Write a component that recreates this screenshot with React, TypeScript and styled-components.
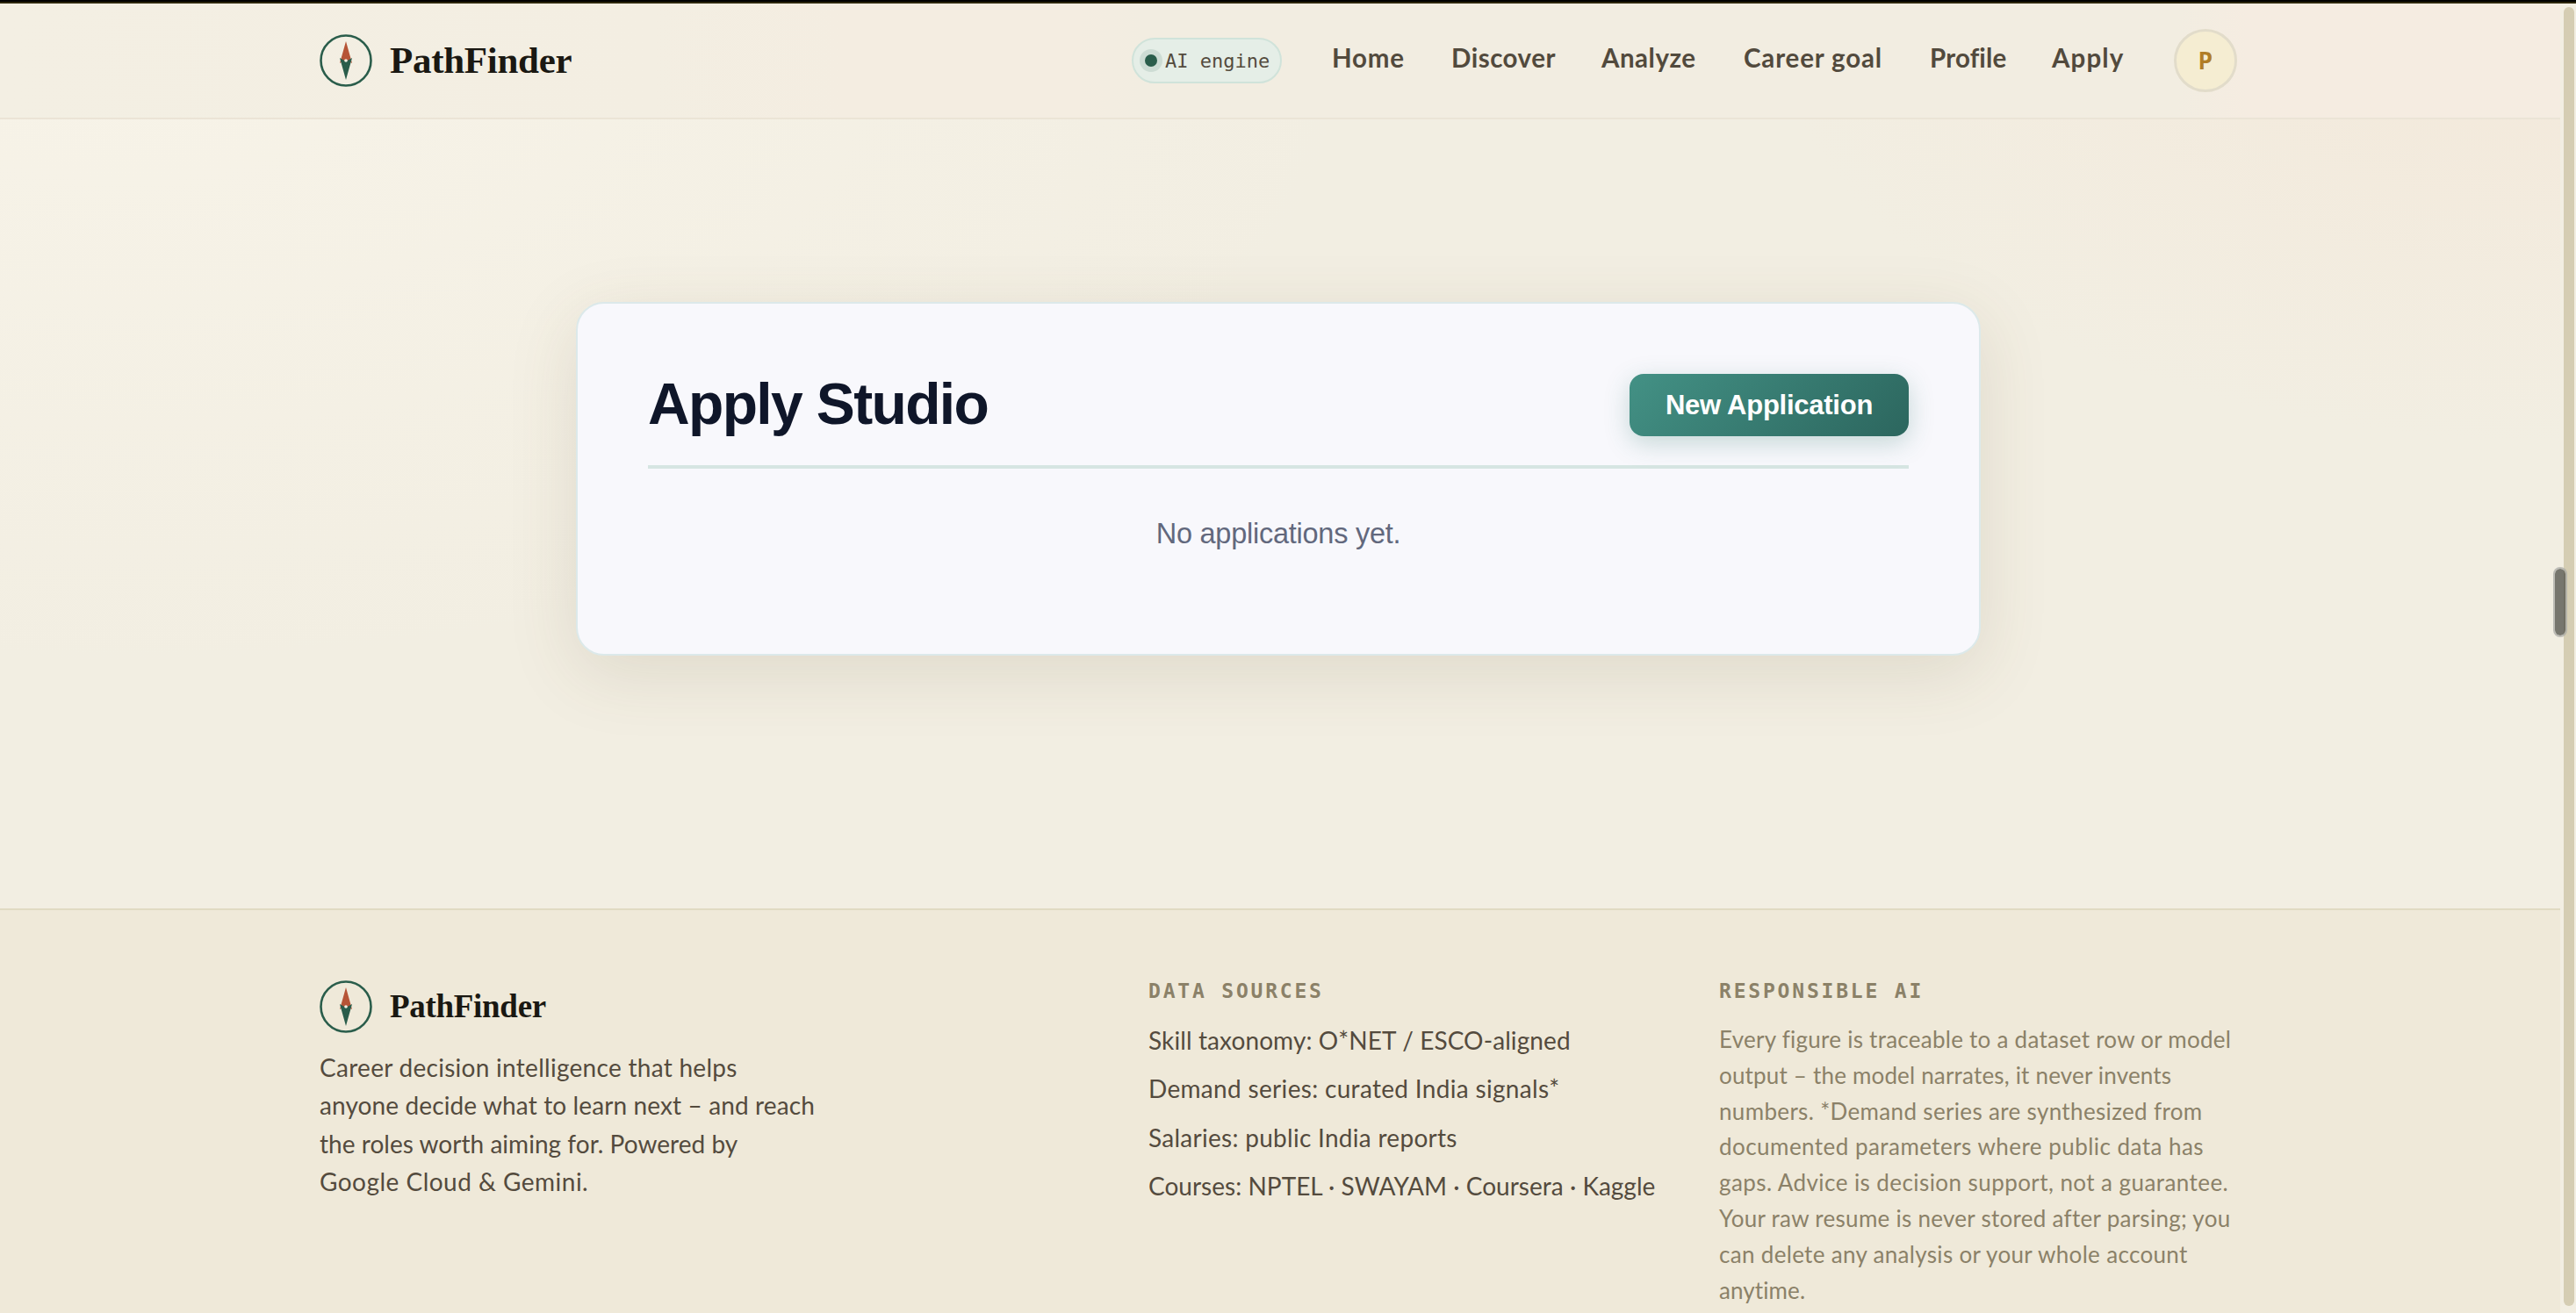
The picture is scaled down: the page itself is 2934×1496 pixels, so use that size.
import React from 'react';
import styled, { createGlobalStyle } from 'styled-components';

const GlobalStyle = createGlobalStyle`
  *, *::before, *::after {
    box-sizing: border-box;
  }
  html, body, #root {
    margin: 0;
    height: 100%;
    overflow: hidden;
  }
  body {
    background: #f2eee2;
    font-family: Lato, sans-serif;
    color: #544b3e;
  }
  h1, h2, p, ul {
    margin: 0;
    padding: 0;
  }
`;

const Screen = styled.div`
  position: relative;
  display: flex;
  flex-direction: column;
  width: 2934px;
  height: 1496px;
  overflow: hidden;
  border-top: 2px solid #000;
`;

const Viewport = styled.div`
  display: flex;
  flex: 1;
  min-height: 0;
  border-top: 2px solid #2c2608;
`;

const Page = styled.div`
  display: flex;
  flex-direction: column;
  width: 2916px;
  background:
    radial-gradient(ellipse 900px 500px at 100% 0, rgba(244, 230, 215, 0.7), transparent),
    radial-gradient(ellipse 1400px 700px at 5% 4%, #f7f3e8, transparent),
    #f2eee2;
`;

const Header = styled.header`
  display: flex;
  flex: none;
  align-items: center;
  height: 132px;
  padding: 0 368px 0 364px;
  background: linear-gradient(90deg, #f3efe3 0, #f3eee2 740px, #f4ede1 960px, #f4ede1 1230px, #f2ede1 1300px, #f2ede1 2480px, #f5ece1 2560px);
  border-bottom: 2px solid #ebe4d6;
`;

const Brand = styled.div<{ $small?: boolean }>`
  display: flex;
  align-items: center;
  gap: 20px;
  font-family: 'Liberation Serif', serif;
  font-weight: 700;
  font-size: ${(p) => (p.$small ? 37 : 43)}px;
  line-height: 58px;
  letter-spacing: -0.3px;
  color: #1a1812;
`;

const Nav = styled.nav`
  display: flex;
  align-items: center;
  margin-left: auto;
`;

const EnginePill = styled.div`
  display: flex;
  align-items: center;
  gap: 9px;
  width: 171px;
  height: 52px;
  margin-right: 57px;
  padding-left: 13px;
  border: 2px solid #d0e3da;
  border-radius: 26px;
  background: #e5eee7;
  font-family: 'DejaVu Sans Mono', monospace;
  font-size: 22px;
  white-space: nowrap;
`;

const Dot = styled.span`
  width: 14px;
  height: 14px;
  border-radius: 50%;
  background: #2a5d4b;
  box-shadow: 0 0 0 6px #cddcd4;
`;

const NavLink = styled.a<{ $width: number; $tracking: number }>`
  width: ${(p) => p.$width}px;
  padding-bottom: 6px;
  font-size: 29.5px;
  font-weight: 700;
  line-height: 40px;
  letter-spacing: ${(p) => p.$tracking}px;
  white-space: nowrap;
  color: #524a3d;
`;

const Avatar = styled.div`
  display: grid;
  place-items: center;
  width: 72px;
  height: 72px;
  border: 3px solid #e2dcca;
  border-radius: 50%;
  background: #f5edd2;
  font-family: 'DejaVu Sans Mono', monospace;
  font-size: 27px;
  font-weight: 700;
  color: #b07d26;
`;

const Main = styled.main`
  flex: none;
  height: 899px;
  padding: 208px 0 0 656px;
`;

const Card = styled.section`
  width: 1600px;
  height: 403px;
  padding: 80px;
  border: 2px solid #dce9ea;
  border-radius: 32px;
  background: #f8f8fc;
  box-shadow: 0 20px 80px rgba(90, 76, 50, 0.13);
  font-family: 'Liberation Sans', sans-serif;
`;

const CardHead = styled.div`
  display: flex;
  align-items: flex-start;
  justify-content: space-between;
  height: 108px;
  border-bottom: 4px solid #d6e5e2;
`;

const Title = styled.h1`
  font-size: 66px;
  line-height: 68px;
  font-weight: 700;
  letter-spacing: -1.65px;
  color: #0f1629;
`;

const PrimaryButton = styled.button`
  width: 318px;
  height: 71px;
  padding: 0;
  border: none;
  border-radius: 16px;
  background: linear-gradient(135deg, #439185, #2c665e);
  box-shadow: 0 8px 28px rgba(48, 120, 108, 0.25);
  font-family: inherit;
  font-size: 31px;
  font-weight: 700;
  letter-spacing: -0.25px;
  color: #fff;
`;

const Empty = styled.p`
  padding-top: 54px;
  font-size: 32.5px;
  line-height: 40px;
  letter-spacing: -0.25px;
  text-align: center;
  color: #62687d;
`;

const Footer = styled.footer`
  display: grid;
  flex: 1;
  grid-template-columns: 944px 650px 1fr;
  min-height: 0;
  padding: 80px 0 0 364px;
  border-top: 2px solid #e0dac2;
  background: #efe9d9;
`;

const About = styled.p`
  padding-top: 18px;
  font-size: 28px;
  line-height: 43.4px;
  white-space: nowrap;
`;

const FootTitle = styled.h2`
  font-family: 'DejaVu Sans Mono', monospace;
  font-size: 23px;
  line-height: 24px;
  letter-spacing: 2.8px;
  text-transform: uppercase;
  color: #8b8168;
`;

const SourceList = styled.ul`
  padding-top: 17px;
  list-style: none;
  font-size: 28px;
  line-height: 55.4px;
  white-space: nowrap;
`;

const Notice = styled.p`
  padding-top: 23px;
  font-size: 26px;
  line-height: 40.8px;
  white-space: nowrap;
  color: #8b8168;
`;

const Line = styled.span<{ $tracking: number }>`
  display: block;
  letter-spacing: ${(p) => p.$tracking}px;
`;

const Gutter = styled.div`
  flex: 1;
  padding: 4px 2px 0 4px;
  background: #f2eee2;
`;

const Thumb = styled.div`
  width: 12px;
  height: 1480px;
  border-radius: 6px;
  background: #d5cdb3;
`;

const OverlayThumb = styled.div`
  position: absolute;
  top: 644px;
  right: 10px;
  width: 16px;
  height: 80px;
  border: 2px solid rgba(170, 170, 165, 0.75);
  border-radius: 8px;
  background: rgba(80, 80, 74, 0.76);
  background-clip: padding-box;
`;

function Compass() {
  return (
    <svg width="60" height="60" viewBox="0 0 60 60">
      <circle cx="30" cy="30" r="28.5" fill="none" stroke="#2a5d4b" strokeWidth="2.6" />
      <path d="M30 8 L37 33 L30 29 L23 33 Z" fill="#b65436" />
      <path d="M30 52 L23 27 L30 31 L37 27 Z" fill="#2a5d4b" />
      <circle cx="30" cy="30" r="1.8" fill="#f2eee2" />
    </svg>
  );
}

const NAV = [
  { label: 'Home', width: 136, tracking: 0.8 },
  { label: 'Discover', width: 171, tracking: 0.5 },
  { label: 'Analyze', width: 162, tracking: 0.5 },
  { label: 'Career goal', width: 212, tracking: 0.85 },
  { label: 'Profile', width: 139, tracking: 0.15 },
  { label: 'Apply', width: 139, tracking: 1.1 },
];

const ABOUT = [
  { text: 'Career decision intelligence that helps', tracking: 0.28 },
  { text: 'anyone decide what to learn next – and reach', tracking: 0.12 },
  { text: 'the roles worth aiming for. Powered by', tracking: 0.03 },
  { text: 'Google Cloud & Gemini.', tracking: 0.48 },
];

const SOURCES = [
  { text: 'Skill taxonomy: O*NET / ESCO-aligned', tracking: 0.1 },
  { text: 'Demand series: curated India signals*', tracking: 0.32 },
  { text: 'Salaries: public India reports', tracking: 0.28 },
  { text: 'Courses: NPTEL · SWAYAM · Coursera · Kaggle', tracking: 0.02 },
];

const NOTICE = [
  { text: 'Every figure is traceable to a dataset row or model', tracking: 0.26 },
  { text: 'output – the model narrates, it never invents', tracking: 0.18 },
  { text: 'numbers. *Demand series are synthesized from', tracking: 0.34 },
  { text: 'documented parameters where public data has', tracking: 0.46 },
  { text: 'gaps. Advice is decision support, not a guarantee.', tracking: 0.43 },
  { text: 'Your raw resume is never stored after parsing; you', tracking: 0.28 },
  { text: 'can delete any analysis or your whole account', tracking: 0.32 },
  { text: 'anytime.', tracking: 0.1 },
];

export default function App() {
  return (
    <Screen>
      <GlobalStyle />
      <Viewport>
        <Page>
          <Header>
            <Brand>
              <Compass />
              PathFinder
            </Brand>
            <Nav>
              <EnginePill>
                <Dot />
                AI engine
              </EnginePill>
              {NAV.map((item) => (
                <NavLink key={item.label} $width={item.width} $tracking={item.tracking}>
                  {item.label}
                </NavLink>
              ))}
              <Avatar>P</Avatar>
            </Nav>
          </Header>
          <Main>
            <Card>
              <CardHead>
                <Title>Apply Studio</Title>
                <PrimaryButton type="button">New Application</PrimaryButton>
              </CardHead>
              <Empty>No applications yet.</Empty>
            </Card>
          </Main>
          <Footer>
            <div>
              <Brand $small>
                <Compass />
                PathFinder
              </Brand>
              <About>
                {ABOUT.map((line) => (
                  <Line key={line.text} $tracking={line.tracking}>
                    {line.text}
                  </Line>
                ))}
              </About>
            </div>
            <div>
              <FootTitle>Data sources</FootTitle>
              <SourceList>
                {SOURCES.map((line) => (
                  <li key={line.text}>
                    <Line $tracking={line.tracking}>{line.text}</Line>
                  </li>
                ))}
              </SourceList>
            </div>
            <div>
              <FootTitle>Responsible AI</FootTitle>
              <Notice>
                {NOTICE.map((line) => (
                  <Line key={line.text} $tracking={line.tracking}>
                    {line.text}
                  </Line>
                ))}
              </Notice>
            </div>
          </Footer>
        </Page>
        <Gutter>
          <Thumb />
        </Gutter>
      </Viewport>
      <OverlayThumb />
    </Screen>
  );
}
